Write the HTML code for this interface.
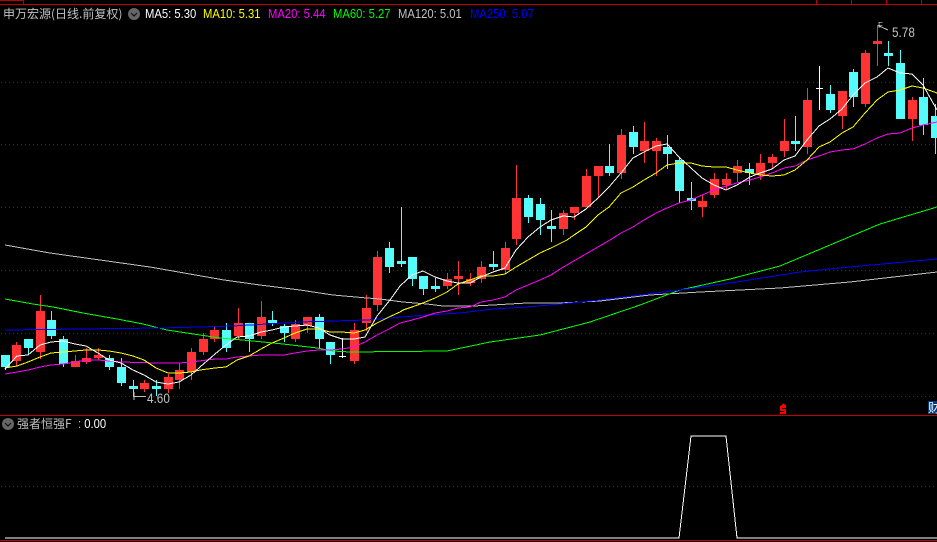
<!DOCTYPE html>
<html><head><meta charset="utf-8"><style>
html,body{margin:0;padding:0;background:#000;width:937px;height:542px;overflow:hidden}
#c{position:relative;width:937px;height:542px;overflow:hidden;background:#000}
svg{position:absolute;left:0;top:0}
.d{position:absolute;left:1px;width:936px;height:1px;background:repeating-linear-gradient(90deg,#a00000 0,#a00000 1px,transparent 1px,transparent 4px)}
.t{position:absolute;white-space:pre;font:12px/14px "Liberation Sans","WenQuanYi Zen Hei",sans-serif}
.m{font-size:13px;transform:scaleX(.865);transform-origin:0 0}
.n{font-size:14px;transform:scaleX(.84);transform-origin:0 0}
.z{font-family:"WenQuanYi Zen Hei","Noto Sans CJK SC",sans-serif}
</style></head><body><div id="c">
<div class="d" style="top:82px"></div>
<div class="d" style="top:144px"></div>
<div class="d" style="top:207px"></div>
<div class="d" style="top:270px"></div>
<div class="d" style="top:333px"></div>
<div class="d" style="top:396px"></div>
<div class="d" style="top:486px"></div>
<svg width="937" height="542" shape-rendering="crispEdges" fill="none">
<g stroke="#c00000">
<path d="M0 4.5H937M0 415.5H937M0 540.5H937M23.5 0V4M816.5 0V4M851.5 0V4M886.5 0V4M921.5 0V4M0 0.5H23"/>
</g>
<path stroke="#ff3333" d="M16.5 342V366M40.5 295V359M75.5 355V367M86.5 348V364M98.5 348V360M144.5 380V392M168.5 374V393M179.5 363V389M191.5 348V380M203.5 333V355M214.5 327V342M238.5 308V339M261.5 301V339M295.5 320V342M307.5 317V333M354.5 323V364M366.5 295V331M377.5 251V311M447.5 273V289M458.5 261V295M470.5 273V286M481.5 261V283M505.5 242V273M516.5 165V245M563.5 210V235M574.5 207V220M586.5 169V207M598.5 166V198M621.5 129V179M644.5 122V163M656.5 138V176M702.5 195V217M714.5 173V198M726.5 173V190M737.5 160V182M760.5 154V180M772.5 154V168M784.5 119V157M807.5 88V154M842.5 91V129M865.5 50V107M877.5 25V66M912.5 97V141"/>
<path stroke="#ff3333" stroke-width="9" d="M16.5 345V361M40.5 311V352M75.5 361V367M86.5 358V362M98.5 355V358M144.5 383V389M168.5 377V389M179.5 370V380M191.5 352V372M203.5 339V352M214.5 330V339M238.5 323V336M261.5 317V336M295.5 324V339M307.5 317V326M354.5 330V361M366.5 308V323M377.5 257V305M447.5 279V286M458.5 276V279M470.5 279V283M481.5 267V279M505.5 248V270M516.5 198V239M563.5 213V229M574.5 207V213M586.5 176V207M598.5 166V176M621.5 135V173M644.5 141V151M656.5 141V151M702.5 201V207M714.5 179V195M726.5 179V185M737.5 166V173M760.5 163V175M772.5 157V163M784.5 141V151M807.5 100V147M842.5 91V116M865.5 53V104M877.5 41V44M912.5 100V119"/>
<path stroke="#54fcfc" d="M5.5 355V370M28.5 339V355M51.5 311V339M63.5 336V367M109.5 355V370M121.5 358V386M133.5 380V397M156.5 380V396M226.5 323V352M249.5 323V352M272.5 311V326M284.5 324V342M319.5 314V348M330.5 342V364M389.5 242V273M401.5 207V267M412.5 257V286M423.5 276V295M435.5 278V292M493.5 251V270M528.5 195V223M540.5 198V235M551.5 210V242M609.5 144V176M633.5 126V154M667.5 135V169M679.5 157V203M691.5 182V210M749.5 163V185M795.5 116V151M830.5 85V113M853.5 69V107M888.5 41V66M900.5 50V119M923.5 78V135M935.5 104V154"/>
<path stroke="#54fcfc" stroke-width="9" d="M5.5 355V367M28.5 339V348M51.5 320V336M63.5 339V364M109.5 358V367M121.5 367V383M133.5 386V389M156.5 386V389M226.5 330V348M249.5 323V339M272.5 320V323M284.5 326V333M319.5 317V339M330.5 342V355M389.5 248V267M401.5 261V264M412.5 257V279M423.5 276V289M435.5 286V289M493.5 264V267M528.5 198V217M540.5 204V220M551.5 226V229M609.5 166V173M633.5 132V147M667.5 147V154M679.5 160V191M691.5 198V201M749.5 169V173M795.5 141V144M830.5 94V110M853.5 72V97M888.5 53V56M900.5 63V119M923.5 97V125M935.5 116V138"/>
<path stroke="#fff" d="M342.5 338V358M339 356.5H346M819.5 66V110M816 88.5H823"/>
<polyline stroke="#c0c0c0" points="5,245 50,253 100,260 150,267 224,280 260,285 300,290 333,295 367,298 380,299 403,302 427,304 443,306 473,306 493,305 527,303 560,303 600,301 650,295 700,292 780,288 850,282 937,272"/>
<polyline stroke="#00ff00" points="5,299 33,304 53,307 83,313 117,319 143,324 167,330 200,335 220,338 253,341 283,344 317,348 333,351 350,352 447,351 490,342 540,335 590,322 640,305 680,290 730,279 780,266 830,245 880,224 937,207"/>
<polyline stroke="#0000ff" points="5,330 80,329 160,328 200,327 233,326 267,324 300,322 333,321 367,320 390,318 427,315 460,313 493,309 527,307 560,304 600,300 680,290 730,283 800,272 850,267 937,259"/>
<polyline stroke="#ff00ff" points="5,374 17,372 28,370 40,367 51,365 63,364 75,362 86,360 98,360 109,361 121,362 156,363 179,363 191,362 215,359 226,359 237,357 249,356 261,355 284,355 295,353 307,351 319,350 330,350 342,349 354,347 365,342 377,335 389,329 400,323 412,320 423,317 435,313 447,311 458,308 470,307 481,302 493,300 505,297 516,290 528,285 540,280 551,275 560,269 610,240 621,233 633,227 644,220 656,213 667,208 679,203 691,200 702,195 714,190 726,186 737,183 750,180 760,177 772,173 784,168 795,166 807,160 819,156 830,152 842,150 853,149 865,144 877,138 888,134 900,133 912,128 923,125 937,122"/>
<polyline stroke="#ffff00" points="5,368 17,366 28,362 40,357 51,353 63,352 75,351 86,350 98,350 109,351 121,353 133,356 144,360 156,368 168,373 179,373 191,372 200,370 215,368 226,367 237,360 249,356 261,349 272,343 284,338 295,333 307,329 319,329 330,332 342,332 354,333 365,330 377,323 389,317 400,312 403,310 412,307 423,303 435,298 447,292 458,284 470,280 481,276 493,276 505,274 516,267 528,260 540,253 551,248 567,240 574,235 586,227 598,215 609,207 621,193 633,187 644,180 656,173 667,165 679,163 691,163 702,166 714,167 726,167 737,170 750,173 760,175 772,176 784,175 795,170 807,160 819,147 830,142 842,133 853,127 865,113 877,100 888,92 900,90 912,86 923,88 937,93"/>
<polyline stroke="#fff" points="5,369 17,356 28,355 40,345 51,342 63,341 75,344 86,346 98,353 109,360 121,363 133,370 144,375 156,382 168,384 179,382 191,375 200,367 215,354 226,345 237,337 249,336 261,332 272,330 284,327 295,326 307,325 319,328 330,335 342,339 354,339 365,337 377,316 390,300 400,286 412,275 423,271 435,277 447,281 458,283 470,283 481,277 493,272 505,268 516,250 528,237 540,227 551,220 563,216 574,217 586,209 598,198 609,187 621,173 633,158 644,152 656,146 667,144 679,157 691,168 702,178 714,185 726,190 737,185 750,177 760,173 772,169 784,160 795,156 807,140 819,126 830,119 842,109 853,95 865,83 877,77 888,68 900,73 912,74 923,85 937,110"/>
<polyline stroke="#fff" points="5,538 679,538 691,436 726,436 737,538 937,538"/>
<path stroke="#c0c0c0" d="M134 396.500H146M134 392V400M878 25.500L888 30"/>
<path fill="#ff0000" d="M783.500 403L786 406H781Z"/>
<path stroke="#ff0000" stroke-width="2" d="M786 407H781V410H785V413H780"/>
<rect x="928" y="401" width="9" height="13" fill="#003a78"/>
<circle cx="134" cy="14" r="6" fill="#666" shape-rendering="auto"/>
<path d="M131 13l3 3 3-3" stroke="#111" stroke-width="1.2" shape-rendering="auto"/>
<circle cx="8" cy="424" r="6" fill="#666" shape-rendering="auto"/>
<path d="M5 423l3 3 3-3" stroke="#111" stroke-width="1.2" shape-rendering="auto"/>
</svg>
<div class="t z" style="left:3px;top:7px;color:#c0c0c0">申万宏源(日线.前复权)</div>
<div class="t m" style="left:145px;top:7px;color:#fff">MA5: 5.30</div>
<div class="t m" style="left:203px;top:7px;color:#ff0">MA10: 5.31</div>
<div class="t m" style="left:268px;top:7px;color:#f0f">MA20: 5.44</div>
<div class="t m" style="left:333px;top:7px;color:#0f0">MA60: 5.27</div>
<div class="t m" style="left:398px;top:7px;color:#c0c0c0">MA120: 5.01</div>
<div class="t m" style="left:470px;top:7px;color:#00f">MA250: 5.07</div>
<div class="t n" style="left:147px;top:391px;color:#c0c0c0">4.60</div>
<div class="t n" style="left:892px;top:25px;color:#c0c0c0">5.78</div>
<div class="t" style="left:878px;top:19px;color:#c0c0c0;font-size:8px">F</div>
<div class="t z" style="left:17px;top:417px;color:#c0c0c0">强者恒强F</div>
<div class="t m" style="left:78px;top:417px;color:#c0c0c0">: <span style="color:#fff">0.00</span></div>
<div class="t z" style="left:928px;top:401px;color:#fff;width:9px;overflow:hidden">财</div>
</div></body></html>
